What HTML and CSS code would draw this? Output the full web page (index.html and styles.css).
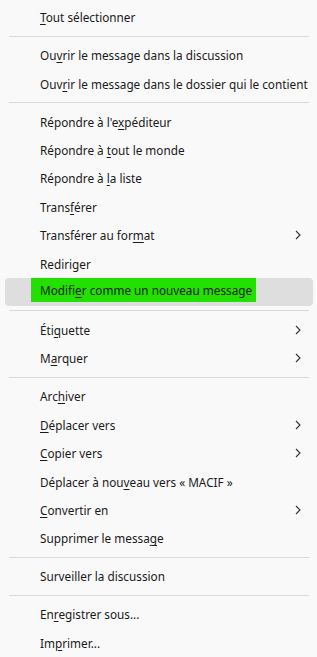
FILE: index.html
```html
<!DOCTYPE html>
<html lang="fr">
<head>
  <meta charset="UTF-8">
  <meta name="viewport" content="width=device-width, initial-scale=1.0">
  <title>Menu contextuel</title>
  <link rel="stylesheet" href="styles.css">
</head>
<body>
  <div class="menu">
    <div class="item"><span><u>T</u>out sélectionner</span></div>
    <div class="sep"></div>
    <div class="item"><span>Ou<u>v</u>rir le message dans la discussion</span></div>
    <div class="item"><span>Ouv<u>r</u>ir le message dans le dossier qui le contient</span></div>
    <div class="sep"></div>
    <div class="item"><span>Répondre à l'e<u>x</u>péditeur</span></div>
    <div class="item"><span>Répondre à <u>t</u>out le monde</span></div>
    <div class="item"><span>Répondre à <u>l</u>a liste</span></div>
    <div class="item"><span>Trans<u>f</u>érer</span></div>
    <div class="item sub"><span>Transférer au for<u>m</u>at</span><svg class="chev" viewBox="0 0 6 10"><path d="M1 1l4 4-4 4"/></svg></div>
    <div class="item"><span>Rediriger</span></div>
    <div class="item active"><span class="mark">Modifi<u>e</u>r comme un nouveau message</span></div>
    <div class="sep"></div>
    <div class="item sub"><span>Éti<u>q</u>uette</span><svg class="chev" viewBox="0 0 6 10"><path d="M1 1l4 4-4 4"/></svg></div>
    <div class="item sub"><span>M<u>a</u>rquer</span><svg class="chev" viewBox="0 0 6 10"><path d="M1 1l4 4-4 4"/></svg></div>
    <div class="sep"></div>
    <div class="item"><span>Arc<u>h</u>iver</span></div>
    <div class="item sub"><span><u>D</u>éplacer vers</span><svg class="chev" viewBox="0 0 6 10"><path d="M1 1l4 4-4 4"/></svg></div>
    <div class="item sub"><span><u>C</u>opier vers</span><svg class="chev" viewBox="0 0 6 10"><path d="M1 1l4 4-4 4"/></svg></div>
    <div class="item"><span>Déplacer à nou<u>v</u>eau vers « MACIF »</span></div>
    <div class="item sub"><span><u>C</u>onvertir en</span><svg class="chev" viewBox="0 0 6 10"><path d="M1 1l4 4-4 4"/></svg></div>
    <div class="item"><span>Supprimer le messa<u>g</u>e</span></div>
    <div class="sep"></div>
    <div class="item"><span>Surveiller la discussion</span></div>
    <div class="sep"></div>
    <div class="item"><span>En<u>r</u>egistrer sous...</span></div>
    <div class="item"><span>Im<u>p</u>rimer...</span></div>
  </div>
</body>
</html>
```

FILE: styles.css
```css
/* Reset */
* {
  margin: 0;
  padding: 0;
  box-sizing: border-box;
}
body {
  font-family: "Segoe UI", "Noto Sans", sans-serif;
  font-size: 11.75px;
  color: #1a1a1a;
  background-color: #f9f9f9;
}

/* Menu */
.menu {
  width: 317px;
  height: 657px;
  padding: 3px 4px 0 5px;
  background-color: #f9f9f9;
}
.item {
  height: 28.35px;
  display: flex;
  align-items: center;
  justify-content: space-between;
  padding: 0 12px 0 35px;
  border-radius: 4px;
  white-space: nowrap;
}
.item u {
  text-decoration-thickness: 1px;
  text-underline-offset: 1.5px;
}
.item.active {
  background-color: #dedede;
}
.item .mark {
  background-color: #22e000;
  margin-left: -9px;
  padding: 3px 4px 3px 9px;
  align-self: flex-start;
  line-height: 18px;
  height: 24px;
}
.chev {
  width: 6px;
  height: 10px;
  fill: none;
  stroke: #333;
  stroke-width: 1.1;
}
.sep {
  height: 9.8px;
  display: flex;
  align-items: center;
  padding: 0 4px;
}
.sep::before {
  content: "";
  flex: 1;
  height: 1px;
  background-color: #d9d9d9;
}
```
